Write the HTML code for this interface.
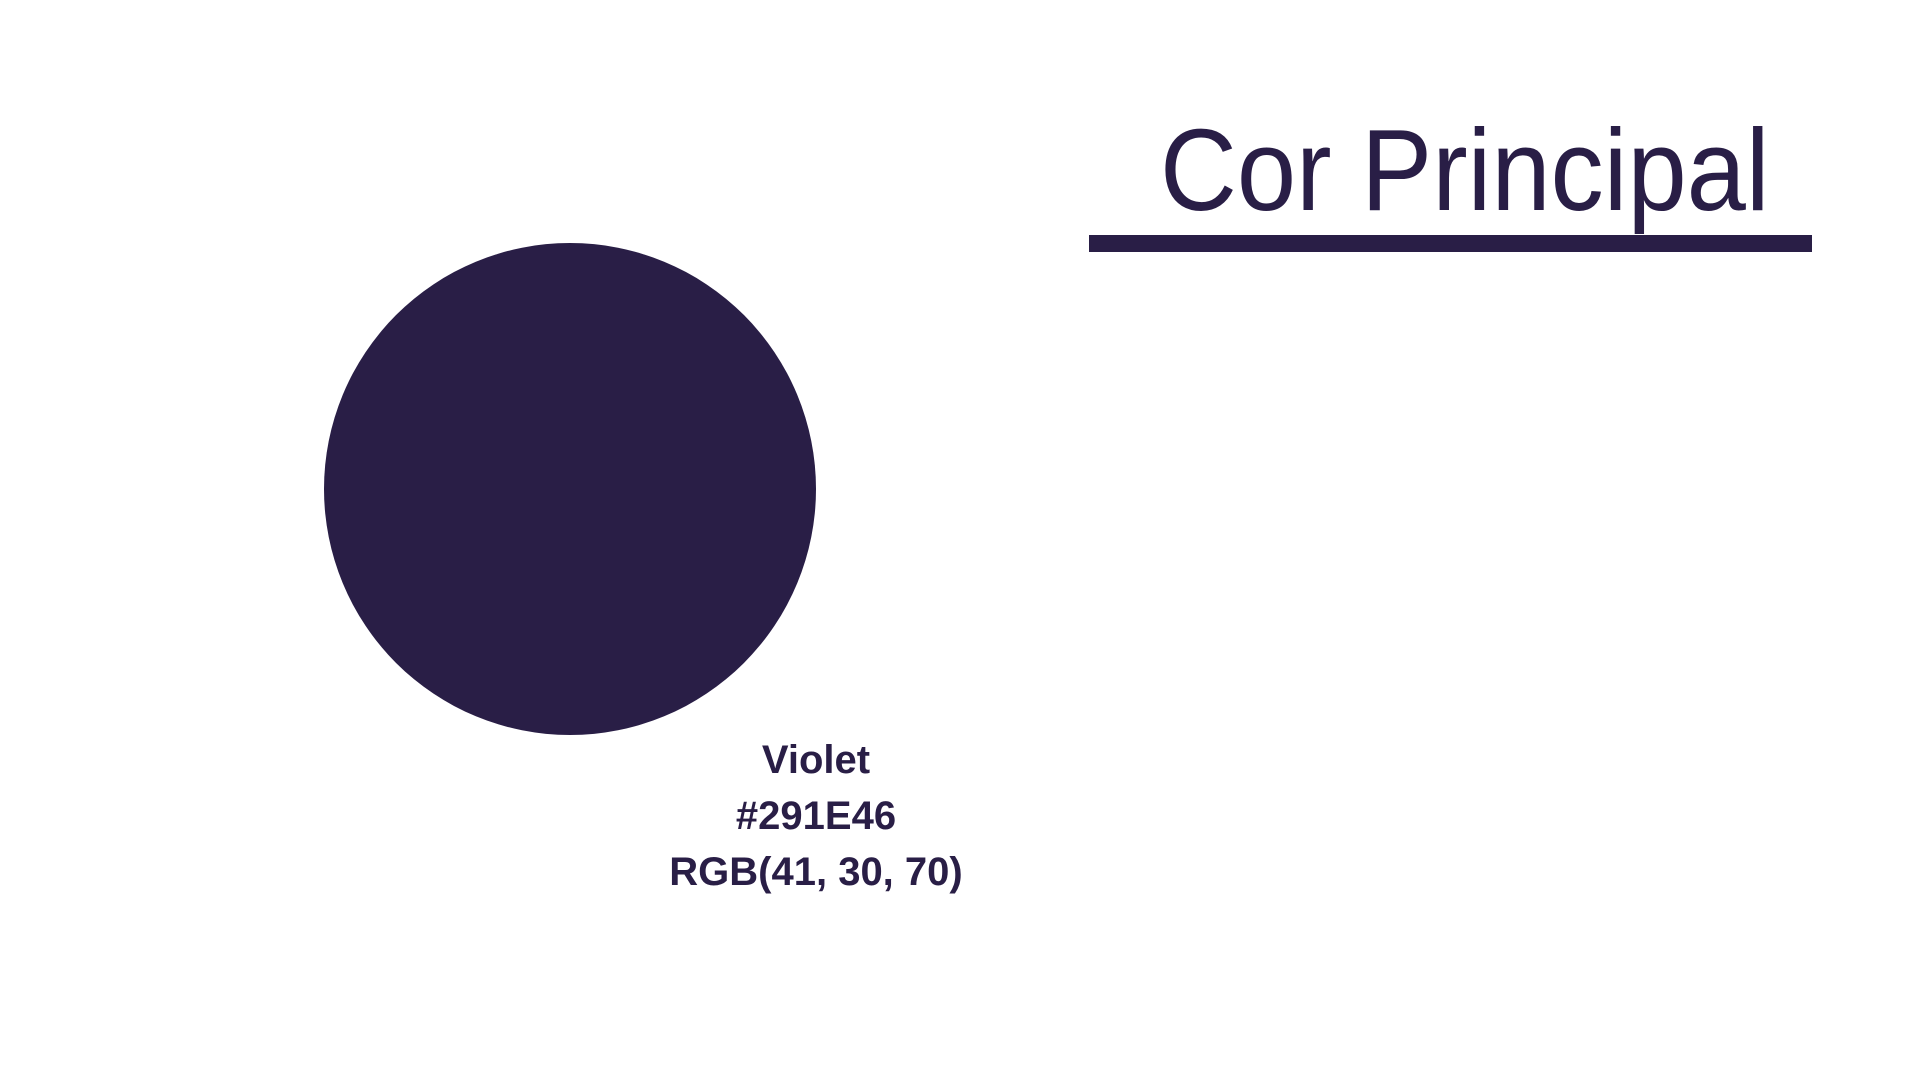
<!DOCTYPE html>
<html><head><meta charset="utf-8"><style>
html,body{margin:0;padding:0;width:1920px;height:1080px;background:#fff;overflow:hidden;font-family:"Liberation Sans",sans-serif;color:#291E46}
.c{position:absolute;left:324px;top:243px;width:492px;height:492px;border-radius:50%;background:#291E46}
.t{position:absolute;left:1160px;top:100px;font-size:116px;line-height:140px;white-space:nowrap;transform:scaleX(0.918);transform-origin:0 0}
.b{position:absolute;left:1089px;top:235px;width:723px;height:17px;background:#291E46}
.l{position:absolute;left:516px;width:600px;text-align:center;font-weight:bold;font-size:40px;line-height:56px;top:732px}
</style></head><body>
<div class="c"></div>
<div class="t">Cor Principal</div>
<div class="b"></div>
<div class="l">Violet<br>#291E46<br>RGB(41, 30, 70)</div>
</body></html>
